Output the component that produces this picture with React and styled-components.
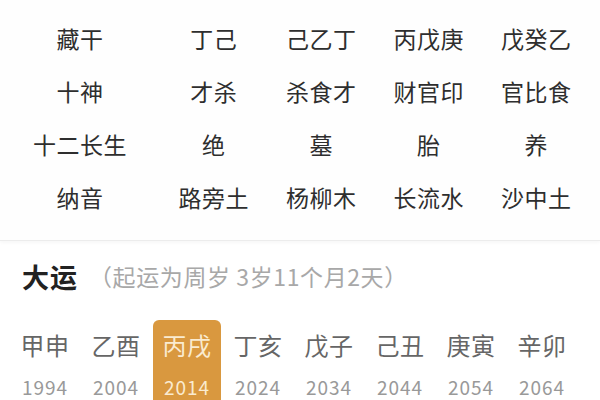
import React from 'react';
import styled, { createGlobalStyle } from 'styled-components';

const GlobalStyle = createGlobalStyle`
  html, body {
    margin: 0;
    padding: 0;
    background: #ffffff;
    font-family: "Noto Sans CJK SC", "Noto Sans", sans-serif;
  }
`

const Page = styled.div`
  width: 600px;
  height: 400px;
  overflow: hidden;
  background: #ffffff;
`
const Table = styled.div`
  display: grid;
  grid-template-columns: 160px repeat(4, 1fr);
  grid-auto-rows: 53px;
  padding: 11px 10px 17px 0;
  background: #fefefe;
  border-bottom: 1px solid #ececec;
  box-shadow: 0 2px 3px rgba(0, 0, 0, 0.03);
`
const Cell = styled.div`
  display: flex;
  align-items: center;
  justify-content: center;
  font-size: 23px;
  color: #2e2e2e;
  letter-spacing: 0.5px;
`
const Section = styled.div`
  padding: 14px 0 0 0;
`
const Heading = styled.div`
  display: flex;
  align-items: center;
  gap: 11px;
  padding-left: 22px;
  height: 42px;
`
const Title = styled.span`
  font-size: 27px;
  font-weight: 700;
  color: #222222;
  letter-spacing: 1px;
`
const Note = styled.span`
  font-size: 23px;
  color: #a8a8a8;
  letter-spacing: 0.6px;
`
const Periods = styled.div`
  display: flex;
  padding-left: 11px;
  margin-top: 23px;
`
const Period = styled.div`
  width: 68px;
  margin-right: 3px;
  display: flex;
  flex-direction: column;
  align-items: center;
  padding-top: 10px;
  height: 90px;
  border-radius: 6px 6px 0 0;
  background: ${p => (p.$active ? '#d9983f' : 'transparent')};
`
const Ganzhi = styled.div`
  font-size: 24px;
  line-height: 30px;
  color: ${p => (p.$active ? '#faebd0' : '#666666')};
  letter-spacing: 0.5px;
`
const Year = styled.div`
  margin-top: 15px;
  font-size: 19px;
  line-height: 24px;
  color: ${p => (p.$active ? '#faebd0' : '#999999')};
  letter-spacing: 1px;
`

const rows = [
  ['藏干', '丁己', '己乙丁', '丙戊庚', '戊癸乙'],
  ['十神', '才杀', '杀食才', '财官印', '官比食'],
  ['十二长生', '绝', '墓', '胎', '养'],
  ['纳音', '路旁土', '杨柳木', '长流水', '沙中土'],
];

const periods = [
  ['甲申', '1994'],
  ['乙酉', '2004'],
  ['丙戌', '2014'],
  ['丁亥', '2024'],
  ['戊子', '2034'],
  ['己丑', '2044'],
  ['庚寅', '2054'],
  ['辛卯', '2064'],
];

function App() {
  const activeIndex = 2;

  return (
    <Page>
      <GlobalStyle />
      <Table>
        {rows.map((row, r) =>
          row.map((text, c) => <Cell key={r + '-' + c}>{text}</Cell>)
        )}
      </Table>
      <Section>
        <Heading>
          <Title>大运</Title>
          <Note>（起运为周岁 3岁11个月2天）</Note>
        </Heading>
        <Periods>
          {periods.map(([gz, year], i) => (
            <Period key={year} $active={i === activeIndex}>
              <Ganzhi $active={i === activeIndex}>{gz}</Ganzhi>
              <Year $active={i === activeIndex}>{year}</Year>
            </Period>
          ))}
        </Periods>
      </Section>
    </Page>
  );
}

export default App;
